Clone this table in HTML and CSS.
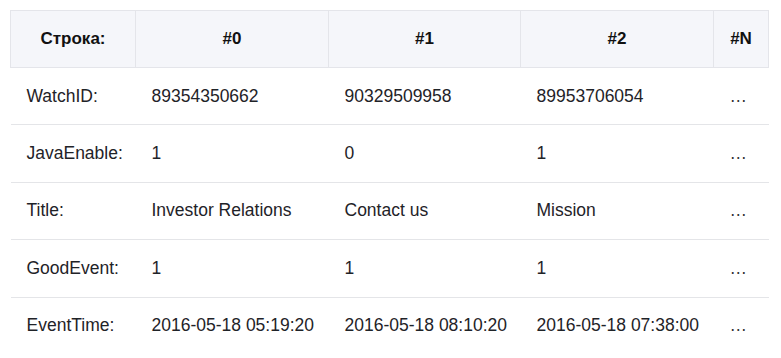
FILE: index.html
```html
<!DOCTYPE html>
<html lang="ru">
<head>
<meta charset="utf-8">
<link rel="stylesheet" href="styles.css">
</head>
<body>
<table class="grid">
  <colgroup>
    <col class="c-label"><col class="c-val"><col class="c-mid"><col class="c-val"><col class="c-more">
  </colgroup>
  <thead>
    <tr><th>Строка:</th><th>#0</th><th>#1</th><th>#2</th><th>#N</th></tr>
  </thead>
  <tbody>
    <tr><td>WatchID:</td><td>89354350662</td><td>90329509958</td><td>89953706054</td><td class="more">…</td></tr>
    <tr><td>JavaEnable:</td><td>1</td><td>0</td><td>1</td><td class="more">…</td></tr>
    <tr><td>Title:</td><td>Investor Relations</td><td>Contact us</td><td>Mission</td><td class="more">…</td></tr>
    <tr><td>GoodEvent:</td><td>1</td><td>1</td><td>1</td><td class="more">…</td></tr>
    <tr class="last"><td>EventTime:</td><td>2016-05-18 05:19:20</td><td>2016-05-18 08:10:20</td><td>2016-05-18 07:38:00</td><td class="more">…</td></tr>
  </tbody>
</table>
</body>
</html>
```
FILE: styles.css
```css
html, body {
  margin: 0;
  padding: 0;
  background: #ffffff;
}
body {
  padding: 10px 13px 0 10px;
  font-family: "Liberation Sans", Arial, sans-serif;
  color: #1f2328;
}
.grid {
  border-collapse: collapse;
  table-layout: fixed;
  width: 758px;
  font-size: 17.5px;
}
.c-label { width: 125px; }
.c-val { width: 193px; }
.c-mid { width: 192px; }
.c-more { width: 55px; }
.grid th {
  background: #f5f6fa;
  border: 1px solid #e4e5ea;
  font-weight: bold;
  font-size: 17px;
  text-align: center;
  height: 56px;
  padding: 0;
  color: #111;
}
.grid td {
  height: 56.4px;
  padding: 0 0 0 16px;
  border-bottom: 1px solid #e4e5e8;
  text-align: left;
  vertical-align: middle;
  white-space: nowrap;
}
.grid tr.last td {
  border-bottom: none;
}
.grid td.more {
  color: #333;
}
```
